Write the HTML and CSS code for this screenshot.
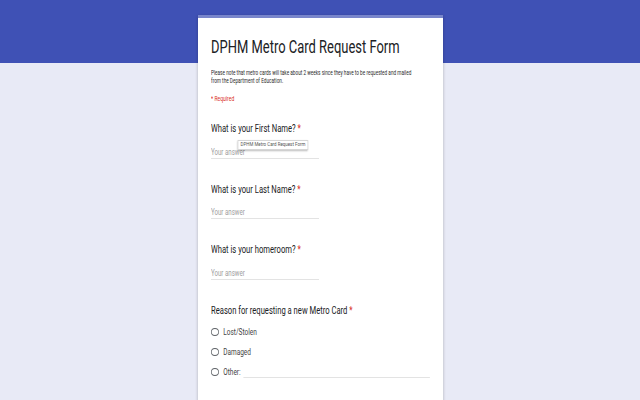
FILE: index.html
```html
<!DOCTYPE html>
<html lang="en">
<head>
<meta charset="utf-8">
<title>DPHM Metro Card Request Form</title>
<link rel="stylesheet" href="styles.css">
</head>
<body>
<div class="card">
  <div class="content">
    <h1 class="title">DPHM Metro Card Request Form</h1>
    <p class="desc">Please note that metro cards will take about 2 weeks since they have to be requested and mailed<br>from the Department of Education.</p>
    <p class="required">* Required</p>
    <div class="questions">
      <div class="question">
        <div class="label">What is your First Name? <span class="star">*</span></div>
        <div class="answer">Your answer</div>
        <div class="tooltip">DPHM Metro Card Request Form</div>
      </div>
      <div class="question">
        <div class="label">What is your Last Name? <span class="star">*</span></div>
        <div class="answer">Your answer</div>
      </div>
      <div class="question">
        <div class="label">What is your homeroom? <span class="star">*</span></div>
        <div class="answer">Your answer</div>
      </div>
      <div class="question">
        <div class="label">Reason for requesting a new Metro Card <span class="star">*</span></div>
        <div class="options">
          <div class="option"><span class="radio"></span><span class="opt-text">Lost/Stolen</span></div>
          <div class="option"><span class="radio"></span><span class="opt-text">Damaged</span></div>
          <div class="option"><span class="radio"></span><span class="opt-text">Other:</span><span class="other-line"></span></div>
        </div>
      </div>
    </div>
  </div>
</div>
</body>
</html>
```
FILE: styles.css
```css
html, body {
  margin: 0;
  padding: 0;
}
body {
  background: linear-gradient(#3f51b5 0, #3f51b5 63px, #e8eaf6 63px, #e8eaf6 100%);
  min-height: 400px;
  font-family: Roboto, "Liberation Sans", sans-serif;
  color: #202124;
  overflow: hidden;
}
.card {
  width: 245px;
  margin: 15px auto 0;
  background: #fff;
  border-top: 3px solid #7986cb;
  box-sizing: border-box;
  padding: 0 0 40px 13px;
  box-shadow: 0 1px 3px rgba(0,0,0,0.25);
}
.content {
  width: 304px;
  padding-top: 19px;
  transform: scaleX(0.72);
  transform-origin: 0 0;
}
.title {
  margin: 0;
  font-size: 18px;
  line-height: 20px;
  font-weight: 400;
  color: #202124;
  white-space: nowrap;
}
.desc {
  margin: 12px 0 0;
  font-size: 6.5px;
  line-height: 8px;
  color: #2a2a2a;
  white-space: nowrap;
}
.required {
  margin: 9px 0 0;
  font-size: 7px;
  line-height: 10px;
  color: #d93025;
}
.questions {
  margin-top: 18px;
}
.question {
  position: relative;
  margin-bottom: 24.2px;
}
.label {
  font-size: 10.6px;
  line-height: 14px;
  color: #202124;
  white-space: nowrap;
}
.star {
  color: #d93025;
}
.answer {
  margin-top: 9.5px;
  width: 150px;
  font-size: 8.5px;
  line-height: 12px;
  color: #9e9e9e;
  border-bottom: 1px solid #e3e3e3;
}
.tooltip {
  position: absolute;
  top: 18px;
  left: 37px;
  padding: 0 3px;
  font-size: 6.2px;
  line-height: 7.5px;
  color: #555;
  background: #fff;
  border: 1px solid #d6d6d6;
  box-shadow: 0 1px 2px rgba(0,0,0,0.3);
  white-space: nowrap;
}
.options {
  margin-top: 4px;
}
.option {
  display: flex;
  align-items: center;
  height: 20px;
}
.radio {
  width: 11px;
  height: 8px;
  border: 1px solid #5f6368;
  border-radius: 50%;
  box-sizing: border-box;
  flex: none;
}
.opt-text {
  margin-left: 6px;
  font-size: 9px;
  color: #444;
}
.other-line {
  flex: 1;
  height: 11px;
  margin-left: 4px;
  border-bottom: 1px solid #e3e3e3;
}
```
